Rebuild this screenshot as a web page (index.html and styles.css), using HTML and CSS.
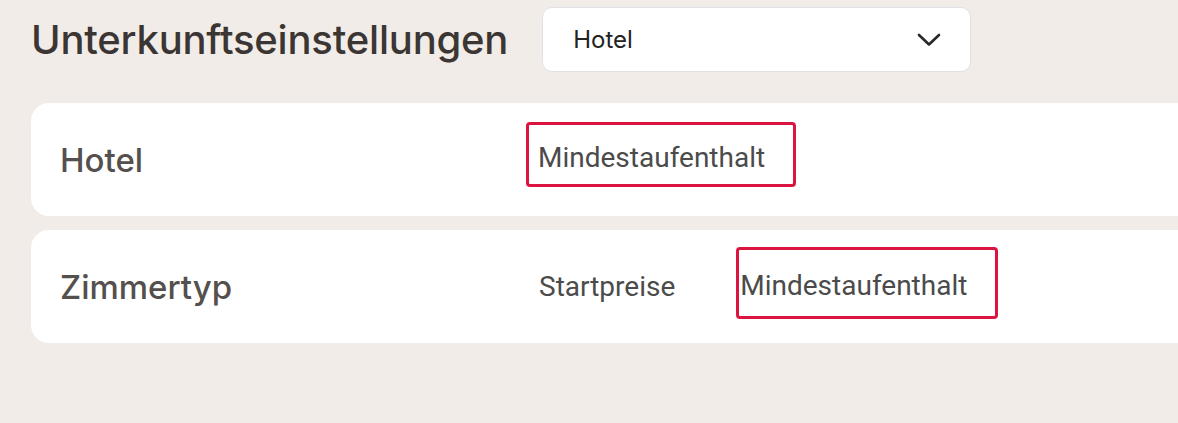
FILE: index.html
```html
<!DOCTYPE html>
<html lang="de">
<head>
    <meta charset="UTF-8" />
    <meta name="viewport" content="width=device-width, initial-scale=1.0"/>
    <title>Unterkunftseinstellungen</title>
    <link rel="stylesheet" href="styles.css">
</head>
<body>
    <div class="page">
        <div class="top">
            <h1>Unterkunftseinstellungen</h1>
            <div class="select">
                <span>Hotel</span>
                <svg class="chevron" width="24" height="14" viewBox="0 0 24 14">
                    <path d="M2 2 L12 11.5 L22 2" fill="none" stroke="#2b2826" stroke-width="2.6" stroke-linecap="round" stroke-linejoin="round"/>
                </svg>
            </div>
        </div>

        <div class="card">
            <div class="label">Hotel</div>
            <div class="items">
                <span class="item mark mark-first">Mindestaufenthalt</span>
            </div>
        </div>

        <div class="card">
            <div class="label">Zimmertyp</div>
            <div class="items">
                <span class="item">Startpreise</span>
                <span class="item mark mark-second">Mindestaufenthalt</span>
            </div>
        </div>
    </div>
</body>
</html>
```

FILE: styles.css
```css
body {
    margin: 0;
    background-color: #f1ece8;
    font-family: Inter, "Noto Sans", sans-serif;
    overflow: hidden;
}
.page {
    padding: 7px 0 0 31px;
}
.top {
    display: flex;
    align-items: center;
    gap: 34px;
}
h1 {
    margin: 0;
    font-size: 40px;
    font-weight: 500;
    color: #3b3633;
    letter-spacing: -0.2px;
}
.select {
    width: 429px;
    height: 65px;
    box-sizing: border-box;
    background-color: #ffffff;
    border: 1px solid #dfe1e4;
    border-radius: 10px;
    display: flex;
    align-items: center;
    justify-content: space-between;
    padding: 0 29px 0 30px;
    font-size: 24px;
    color: #222222;
}
.chevron {
    display: block;
}
.card {
    background-color: #ffffff;
    border-radius: 18px 0 0 18px;
    height: 113px;
    margin-top: 31px;
    display: flex;
    align-items: center;
    padding-left: 29px;
}
.card + .card {
    margin-top: 14px;
}
.label {
    width: 479px;
    font-size: 33px;
    font-weight: 500;
    color: #55504d;
}
.items {
    display: flex;
    align-items: center;
}
.item {
    font-family: Roboto, "Noto Sans", sans-serif;
    font-size: 28px;
    color: #4b4b4b;
}
.mark {
    border: 3px solid #dc1440;
    border-radius: 4px;
    display: flex;
    align-items: center;
    box-sizing: border-box;
}
.mark-first {
    height: 65px;
    margin-left: -13px;
    margin-top: -10px;
    padding: 5px 28px 0 9px;
}
.mark-second {
    height: 72px;
    margin-left: 61px;
    margin-top: -7px;
    padding: 5px 28px 0 1px;
}
```
